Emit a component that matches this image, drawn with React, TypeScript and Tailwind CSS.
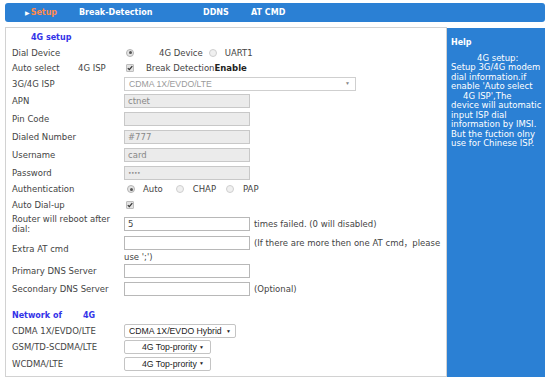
import React from "react";

/* 4G setup 페이지 - 라우터 관리 화면 */

function Radio({ checked = false }: { checked?: boolean }) {
  return (
    <span
      className={`w-[8px] h-[8px] rounded-full border shrink-0 flex items-center justify-center ${
        checked ? "bg-[#e4e4e4] border-[#b4b4b4]" : "bg-[#f0f0f0] border-[#cfcfcf]"
      }`}
    >
      {checked && <span className="w-[3px] h-[3px] rounded-full bg-[#555]" />}
    </span>
  );
}

function Check() {
  return (
    <span className="w-[8px] h-[8px] rounded-[1px] border border-[#bdbdbd] bg-[#e2e2e2] shrink-0 flex items-center justify-center">
      <svg width="6" height="6" viewBox="0 0 6 6">
        <polyline points="0.8,3.2 2.3,4.7 5.3,1.1" fill="none" stroke="#333" strokeWidth="1.2" />
      </svg>
    </span>
  );
}

function TextBox({ value = "", gray = false }: { value?: React.ReactNode; gray?: boolean }) {
  return (
    <div
      className={`w-[126px] h-[14px] border pl-[3px] flex items-center text-[#888] shrink-0 ${
        gray ? "bg-[#ebebeb] border-[#c8c8c8]" : "bg-white border-[#b8b8b8]"
      }`}
    >
      {value}
    </div>
  );
}

function Arrow({ color = "text-[#222]" }: { color?: string }) {
  return <span className={`text-[5px] leading-none ${color}`}>▼</span>;
}

function Row({ h, label, children }: { h: string; label?: React.ReactNode; children?: React.ReactNode }) {
  return (
    <div className={`flex items-center ${h}`}>
      <div className="w-[112px] shrink-0">{label}</div>
      <div className="flex items-center">{children}</div>
    </div>
  );
}

const selectFont = "font-[family-name:'Liberation_Sans',Arial,sans-serif] text-[8.7px]";

export default function App() {
  return (
    <div className="w-[550px] h-[381px] bg-white overflow-hidden font-[family-name:'DejaVu_Sans','Noto_Sans_CJK_SC',sans-serif] text-[8.5px] leading-[10px] text-[#444]">
      {/* 상단 탭 메뉴 */}
      <nav className="mx-[5px] mt-[3px] h-[19px] bg-[#2b80d4] rounded-[3px] flex items-center pl-[20px] text-[8px] font-bold text-white">
        <span className="w-[54px] flex items-center">
          <span className="text-[6px] mr-[1px]">▶</span>
          <span className="text-[#ff8a4c]">Setup</span>
        </span>
        <span className="w-[124px]">Break-Detection</span>
        <span className="w-[48px]">DDNS</span>
        <span>AT CMD</span>
      </nav>

      <div className="flex mt-[5px] ml-[5px]">
        {/* 설정 폼 */}
        <section className="w-[442px] h-[350px] border border-[#d2d2d2] pl-[6px] pt-[3px]">
          <div className="h-[14px] flex items-center pl-[19px] text-[8px] font-bold text-[#3333e8]">4G setup</div>

          <Row h="h-[15px]" label="Dial Device">
            <span className="ml-[2px]"><Radio checked /></span>
            <span className="ml-[25px]">4G Device</span>
            <span className="ml-[6px]"><Radio /></span>
            <span className="ml-[8px]">UART1</span>
          </Row>

          <Row
            h="h-[15px]"
            label={
              <span className="flex">
                <span className="w-[66px]">Auto select</span>
                <span>4G ISP</span>
              </span>
            }
          >
            <span className="ml-[2px]"><Check /></span>
            <span className="ml-[12px]">
              Break Detection<b className="text-[#222]">Enable</b>
            </span>
          </Row>

          <Row h="h-[17px]" label="3G/4G ISP">
            <div className={`w-[232px] h-[14px] border border-[#cfcfcf] bg-white flex items-center justify-between pl-[4px] pr-[5px] text-[#9a9a9a] ${selectFont}`}>
              <span>CDMA 1X/EVDO/LTE</span>
              <Arrow color="text-[#888]" />
            </div>
          </Row>

          <Row h="h-[18px]" label="APN"><TextBox gray value="ctnet" /></Row>
          <Row h="h-[18px]" label="Pin Code"><TextBox gray /></Row>
          <Row h="h-[18px]" label="Dialed Number"><TextBox gray value="#777" /></Row>
          <Row h="h-[18px]" label="Username"><TextBox gray value="card" /></Row>
          <Row h="h-[17px]" label="Password">
            <TextBox gray value={<span className="text-[6px] tracking-[-0.5px]">••••</span>} />
          </Row>

          <Row h="h-[16px]" label="Authentication">
            <span className="ml-[3px]"><Radio checked /></span>
            <span className="ml-[8px]">Auto</span>
            <span className="ml-[13px]"><Radio /></span>
            <span className="ml-[9px]">CHAP</span>
            <span className="ml-[10px]"><Radio /></span>
            <span className="ml-[9px]">PAP</span>
          </Row>

          <Row h="h-[15px]" label="Auto Dial-up">
            <span className="ml-[2px]"><Check /></span>
          </Row>

          <Row
            h="h-[23px]"
            label={
              <span className="block leading-[10px]">
                Router will reboot after
                <br />
                dial:
              </span>
            }
          >
            <TextBox value={<span className="text-[#444]">5</span>} />
            <span className="ml-[4px] whitespace-nowrap">times failed. (0 will disabled)</span>
          </Row>

          <Row h="h-[27px]" label="Extra AT cmd">
            <div className="flex flex-col">
              <div className="flex items-center">
                <TextBox />
                <span className="ml-[4px] whitespace-nowrap">(If there are more then one AT cmd，please</span>
              </div>
              <div className="h-[12px] flex items-end">use ';')</div>
            </div>
          </Row>

          <Row h="h-[18px]" label="Primary DNS Server"><TextBox /></Row>
          <Row h="h-[18px]" label="Secondary DNS Server">
            <TextBox />
            <span className="ml-[4px]">(Optional)</span>
          </Row>

          <div className="h-[11px]" />

          {/* 네트워크 우선순위 */}
          <div className="h-[14px] flex items-center text-[8px] font-bold text-[#3333e8]">
            <span className="w-[71px]">Network of</span>
            <span>4G</span>
          </div>

          <Row h="h-[16px]" label="CDMA 1X/EVDO/LTE">
            <div className={`w-[112px] h-[14px] border border-[#c4c4c4] rounded-[2px] bg-white flex items-center justify-between pl-[4px] pr-[4px] text-[#222] ${selectFont}`}>
              <span>CDMA 1X/EVDO Hybrid</span>
              <Arrow />
            </div>
          </Row>
          <Row h="h-[16px]" label="GSM/TD-SCDMA/LTE">
            <div className={`w-[87px] h-[14px] border border-[#c4c4c4] rounded-[2px] bg-white flex items-center justify-between pl-[17px] pr-[6px] text-[#222] ${selectFont}`}>
              <span>4G Top-prority</span>
              <Arrow />
            </div>
          </Row>
          <Row h="h-[17px]" label="WCDMA/LTE">
            <div className={`w-[87px] h-[14px] border border-[#c4c4c4] rounded-[2px] bg-white flex items-center justify-between pl-[17px] pr-[6px] text-[#222] ${selectFont}`}>
              <span>4G Top-prority</span>
              <Arrow />
            </div>
          </Row>
        </section>

        {/* 도움말 패널 */}
        <aside className="w-[98px] h-[349px] mt-[1px] bg-[#2b80d4] text-white pl-[4px] pt-[10px] leading-[9.5px]">
          <div className="font-bold text-[8px]">Help</div>
          <div className="mt-[6px] whitespace-nowrap">
            <div className="pl-[26px]">4G setup:</div>
            <div>Setup 3G/4G modem</div>
            <div>dial information.if</div>
            <div>enable 'Auto select</div>
            <div className="pl-[12px]">4G ISP',The</div>
            <div>device will automatic</div>
            <div>input ISP dial</div>
            <div>information by IMSI.</div>
            <div>But the fuction olny</div>
            <div>use for Chinese ISP.</div>
          </div>
        </aside>
      </div>
    </div>
  );
}
